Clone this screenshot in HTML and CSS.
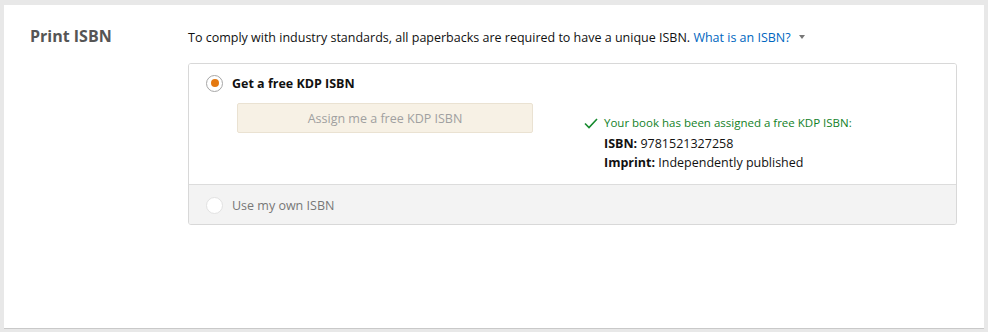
FILE: index.html
```html
<!DOCTYPE html>
<html lang="en">
<head>
    <meta charset="UTF-8">
    <title>Print ISBN</title>
    <link rel="stylesheet" href="styles.css">
</head>
<body>
    <div class="card">
        <div class="section-label">Print ISBN</div>
        <div class="section-body">
            <p class="intro">To comply with industry standards, all paperbacks are required to have a unique ISBN. <a href="#" class="help-link">What is an ISBN?</a><span class="caret"></span></p>

            <div class="options">
                <div class="option option-active">
                    <label class="option-head">
                        <span class="radio radio-checked"></span>
                        <span class="option-title">Get a free KDP ISBN</span>
                    </label>
                    <div class="option-content">
                        <button class="btn-assign" disabled>Assign me a free KDP ISBN</button>
                        <div class="assigned">
                            <p class="assigned-msg">
                                <svg class="check" width="14" height="11" viewBox="0 0 14 11"><path d="M1 5.5 L5 9.5 L13 1" fill="none" stroke="#168a2e" stroke-width="1.6"/></svg>
                                Your book has been assigned a free KDP ISBN:
                            </p>
                            <p class="assigned-line"><b>ISBN:</b> 9781521327258</p>
                            <p class="assigned-line"><b>Imprint:</b> Independently published</p>
                        </div>
                    </div>
                </div>
                <div class="option option-disabled">
                    <label class="option-head">
                        <span class="radio"></span>
                        <span class="option-title-muted">Use my own ISBN</span>
                    </label>
                </div>
            </div>
        </div>
    </div>
</body>
</html>
```

FILE: styles.css
```css
* {
    margin: 0;
    padding: 0;
    box-sizing: border-box;
}

body {
    font-family: 'Open Sans', 'Noto Sans', sans-serif;
    background-color: #e8e8e8;
    color: #111;
    padding: 5px 4px 3px 4px;
    height: 332px;
}

.card {
    background: #fff;
    height: 324px;
    border-bottom: 1px solid #c9c9c9;
    display: flex;
    padding: 21px 26px 0 26px;
}

.section-label {
    width: 158px;
    flex: 0 0 158px;
    font-size: 16px;
    font-weight: 700;
    color: #555;
    line-height: 20px;
}

.section-body {
    width: 769px;
}

.intro {
    font-size: 12.5px;
    line-height: 18px;
    padding-top: 3px;
    margin-bottom: 16px;
}

.help-link {
    color: #0066c0;
    text-decoration: none;
}

.caret {
    display: inline-block;
    width: 0;
    height: 0;
    margin-left: 8px;
    vertical-align: 3px;
    border-left: 3.5px solid transparent;
    border-right: 3.5px solid transparent;
    border-top: 4px solid #777;
}

.options {
    border: 1px solid #d8d8d8;
    border-radius: 3px;
    overflow: hidden;
}

.option-active {
    background: #fff;
    padding: 9px 17px 15px 17px;
    height: 121px;
    border-bottom: 1px solid #dcdcdc;
}

.option-disabled {
    background: #f3f3f3;
    padding: 10px 17px;
    height: 39px;
}

.option-head {
    display: flex;
    align-items: center;
    gap: 9px;
    height: 20px;
}

.radio {
    width: 17px;
    height: 17px;
    border-radius: 50%;
    border: 1px solid #a6a6a6;
    background: #fff;
    display: flex;
    align-items: center;
    justify-content: center;
}

.radio-checked::after {
    content: "";
    width: 8px;
    height: 8px;
    border-radius: 50%;
    background: #e47911;
}

.option-disabled .radio {
    border-color: #e2e2e2;
}

.option-title {
    font-size: 12.5px;
    font-weight: 700;
}

.option-title-muted {
    font-size: 12.5px;
    color: #777;
}

.option-content {
    display: flex;
    padding-left: 31px;
    margin-top: 10px;
}

.btn-assign {
    width: 296px;
    height: 30px;
    background: #f7f1e5;
    border: 1px solid #eae2d2;
    border-radius: 2px;
    color: #a0a0a0;
    font-family: inherit;
    font-size: 12.5px;
}

.assigned {
    margin-left: 71px;
    padding-top: 11px;
}

.assigned-msg {
    font-size: 11.5px;
    color: #127f27;
    line-height: 18px;
    display: flex;
    align-items: center;
    gap: 6px;
    margin-left: -20px;
    margin-bottom: 2px;
}

.check {
    flex: 0 0 14px;
}

.assigned-line {
    font-size: 12.5px;
    line-height: 19px;
}
```
